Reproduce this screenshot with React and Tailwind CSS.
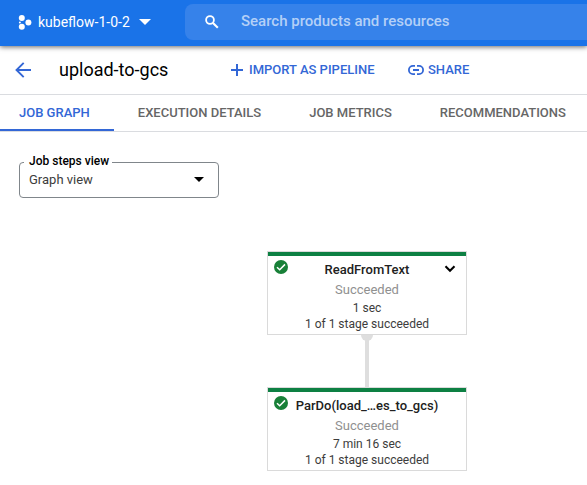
import React from "react";

const tabs = ["JOB GRAPH", "EXECUTION DETAILS", "JOB METRICS", "RECOMMENDATIONS"];

function CheckBadge() {
  return (
    <svg className="absolute left-[6px] top-[8px] size-[14px]" viewBox="0 0 14 14" aria-hidden="true">
      <circle cx="7" cy="7" r="7" fill="#188038" />
      <path d="M3 7.2 L5.7 9.8 L11 4.4" fill="none" stroke="#fff" strokeWidth="1.5" />
    </svg>
  );
}

function StepNode({ name, time, expandable }) {
  return (
    <article className="relative flex h-[84px] w-[200px] flex-col items-center border border-[#dadada] bg-white">
      <div className="h-1 w-full shrink-0 bg-[#0d8043]" />
      <CheckBadge />
      <h2 className="mt-1 text-[13px] leading-[20px] font-medium whitespace-nowrap text-[#212121]">{name}</h2>
      {expandable && (
        <button type="button" aria-label="Expand step" className="absolute top-[13px] right-[10px]">
          <svg className="block h-[8px] w-[12px]" viewBox="0 0 12 8" aria-hidden="true">
            <path d="M1.5 1.3 L6 5.8 L10.5 1.3" fill="none" stroke="#000" strokeWidth="2.1" />
          </svg>
        </button>
      )}
      <p className="text-[13px] leading-[20px] text-[#909090]">Succeeded</p>
      <p className="text-[12px] leading-[16px] text-[#3c3c3c]">{time}</p>
      <p className="text-[12px] leading-[16px] text-[#3c3c3c]">1 of 1 stage succeeded</p>
    </article>
  );
}

export default function App() {
  return (
    <div className="min-h-screen overflow-x-hidden bg-white font-['Roboto',sans-serif]">
      <header className="relative flex h-[46px] items-center bg-[#1a73e8] pb-[2px] text-white shadow-[0_1px_5px_rgba(0,0,0,0.6)]">
        <button type="button" className="ml-[18px] flex w-[167px] shrink-0 items-center">
          <svg className="h-[15px] w-[14px]" viewBox="0 0 14 15" fill="#fff" aria-hidden="true">
            <circle cx="3.8" cy="3.1" r="3" />
            <circle cx="10.4" cy="7.4" r="3" />
            <circle cx="3.8" cy="11.7" r="3" />
            <circle cx="1.9" cy="7.4" r="1" />
          </svg>
          <span className="ml-[6px] text-[14px] leading-[20px] whitespace-nowrap">kubeflow-1-0-2</span>
          <svg className="ml-[9px] h-[6px] w-[12px]" viewBox="0 0 12 6" fill="#fff" aria-hidden="true">
            <path d="M0 0H12L6 6Z" />
          </svg>
        </button>
        <label className="flex h-9 min-w-0 flex-1 items-center rounded-l-lg bg-[#3682ea] pl-[20px]">
          <svg className="size-[14px] shrink-0" viewBox="0 0 14 14" fill="none" stroke="#fff" aria-hidden="true">
            <circle cx="5" cy="5" r="3.9" strokeWidth="1.8" />
            <path d="M8 8L12.8 12.8" strokeWidth="2.1" />
          </svg>
          <input
            type="search"
            aria-label="Search products and resources"
            placeholder="Search products and resources"
            className="mb-[2px] ml-[22px] min-w-0 flex-1 bg-transparent text-[15px] leading-[20px] font-medium outline-none placeholder:text-[#b4d0f7]"
          />
        </label>
      </header>

      <div className="flex h-[49px] items-center border-b border-[#dadce0] text-[#3367d6]">
        <button type="button" aria-label="Back" className="ml-[15px]">
          <svg className="block size-4" viewBox="0 0 16 16" fill="none" stroke="#3367d6" strokeWidth="1.9" aria-hidden="true">
            <path d="M16 8H1.5M8.7 .8L1.5 8L8.7 15.2" />
          </svg>
        </button>
        <h1 className="ml-7 w-[172px] text-[18px] leading-[24px] whitespace-nowrap text-black">upload-to-gcs</h1>
        <button type="button" className="flex w-[177px] items-center gap-[6px] text-[13px] leading-[20px] font-medium whitespace-nowrap">
          <svg className="size-3" viewBox="0 0 12 12" stroke="#3367d6" strokeWidth="2" aria-hidden="true">
            <path d="M6 0V12M0 6H12" />
          </svg>
          IMPORT AS PIPELINE
        </button>
        <button type="button" className="flex items-center gap-1 text-[13px] leading-[20px] font-medium">
          <svg className="h-[10px] w-4" viewBox="0 0 16 10" fill="none" stroke="#3367d6" strokeWidth="1.8" aria-hidden="true">
            <path d="M7 .9H5A4.1 4.1 0 0 0 5 9.1H7M9 .9H11A4.1 4.1 0 0 1 11 9.1H9M5 5H11" />
          </svg>
          SHARE
        </button>
      </div>

      <nav className="flex h-[37px] border-b border-[#dadce0]">
        {tabs.map((tab, i) => (
          <a
            key={tab}
            href="#"
            aria-current={i === 0 ? "page" : undefined}
            className={
              i === 0
                ? "flex shrink-0 items-center border-b-2 border-[#3367d6] pt-[2px] pr-6 pl-[19px] text-[13px] leading-[20px] font-medium whitespace-nowrap text-[#3367d6]"
                : "flex shrink-0 items-center border-b-2 border-transparent px-6 pt-[2px] text-[13px] leading-[20px] font-medium whitespace-nowrap text-[#666666]"
            }
          >
            {tab}
          </a>
        ))}
      </nav>

      <main>
        <div className="relative mt-[30px] ml-[19px] h-9 w-[200px]">
          <label htmlFor="steps-view" className="absolute -top-[9px] left-[5px] bg-white pr-[3px] pl-[5px] text-[12px] leading-[16px] font-medium text-black">
            Job steps view
          </label>
          <select
            id="steps-view"
            className="size-full appearance-none rounded-[4px] border border-[#80868b] bg-transparent pl-[9px] text-[13px] leading-[20px] text-[#3c3c3c]"
          >
            <option>Graph view</option>
          </select>
          <svg className="pointer-events-none absolute top-[15px] right-[15px] h-[5px] w-[10px]" viewBox="0 0 10 5" aria-hidden="true">
            <path d="M0 0H10L5 5Z" fill="#000" />
          </svg>
        </div>

        <section aria-label="Job graph" className="flex flex-col items-center pt-[53px] pl-[147px]">
          <StepNode name="ReadFromText" time="1 sec" expandable />
          <svg className="h-[52px] w-3" viewBox="0 0 12 52" fill="#dedede" aria-hidden="true">
            <path d="M0 0A6 6 0 0 0 12 0Z" />
            <path d="M4 0H8V52H4Z" />
          </svg>
          <StepNode name="ParDo(load_…es_to_gcs)" time="7 min 16 sec" />
        </section>
      </main>
    </div>
  );
}
